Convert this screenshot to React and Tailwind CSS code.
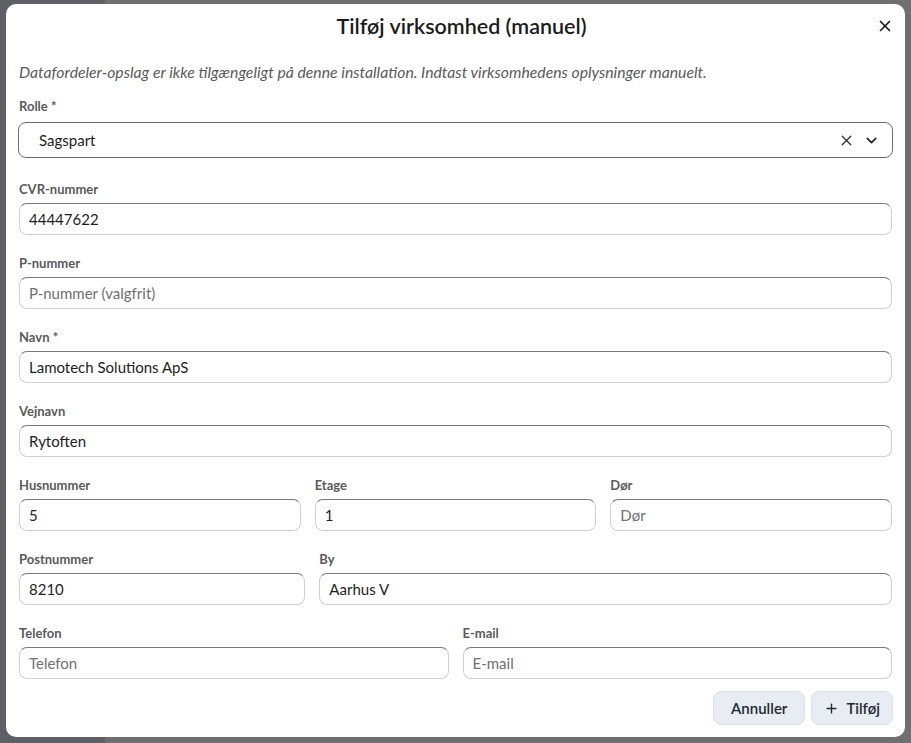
import React from 'react';
import { X, ChevronDown, Plus } from 'lucide-react';

const font = { fontFamily: '"Segoe UI", Lato, "Noto Sans", sans-serif' };

const Field = ({ label, value, placeholder }) => (
  <div className="flex flex-col min-w-0">
    <label className="text-[13px] leading-[18px] font-bold text-[#5a5a5a] mb-[5px]">{label}</label>
    <input
      className="h-8 w-full rounded-[8px] border border-[#d0d0d0] border-t-[#7a7a7a] bg-white px-[9px] text-[15px] text-[#1e1e1e] placeholder:text-[#6f6f6f] outline-none"
      defaultValue={value}
      placeholder={placeholder}
    />
  </div>
);

const App = () => {
  return (
    <div className="relative h-[743px] w-full overflow-hidden bg-[#6f6f6f]" style={font}>
      <div className="absolute left-0 top-0 h-full w-[105px] bg-[#5d6166]" />
      <div className="absolute left-[6px] top-[4px] flex h-[733px] w-[899px] flex-col rounded-[10px] bg-white px-[13px] pb-[12px]">
        <div className="relative flex h-[48px] items-center justify-center pb-[4px] pl-[12px]">
          <h2 className="text-[21.5px] font-semibold text-[#1b1b1b]">Tilføj virksomhed (manuel)</h2>
          <button className="absolute right-[-2px] top-[13px] text-[#1b1b1b]">
            <X size={18} strokeWidth={2.2} />
          </button>
        </div>
        <p className="mt-[10px] text-[15.75px] italic leading-[20px] text-[#5a5a5a]">
          Datafordeler-opslag er ikke tilgængeligt på denne installation. Indtast virksomhedens oplysninger manuelt.
        </p>

        <div className="mt-[15px] flex flex-col">
          <label className="text-[13px] leading-[18px] font-bold text-[#5a5a5a] mb-[7px]">Rolle *</label>
          <div className="-mx-[1px] flex h-9 items-center rounded-[8px] border border-[#6d6d6d] pl-[20px] pr-[12px]">
            <span className="flex-1 text-[15px] text-[#1e1e1e]">Sagspart</span>
            <X size={17} strokeWidth={1.8} className="text-[#2a2a2a] mr-[8px]" />
            <ChevronDown size={17} strokeWidth={2.6} className="text-[#2a2a2a]" />
          </div>
        </div>

        <div className="mt-[22px] flex flex-col gap-[19px]">
          <Field label="CVR-nummer" value="44447622" />
          <Field label="P-nummer" placeholder="P-nummer (valgfrit)" />
          <Field label="Navn *" value="Lamotech Solutions ApS" />
          <Field label="Vejnavn" value="Rytoften" />
          <div className="grid grid-cols-3 gap-x-[14px]">
            <Field label="Husnummer" value="5" />
            <Field label="Etage" value="1" />
            <Field label="Dør" placeholder="Dør" />
          </div>
          <div className="grid grid-cols-[1fr_2fr] gap-x-[14px]">
            <Field label="Postnummer" value="8210" />
            <Field label="By" value="Aarhus V" />
          </div>
          <div className="grid grid-cols-2 gap-x-[14px]">
            <Field label="Telefon" placeholder="Telefon" />
            <Field label="E-mail" placeholder="E-mail" />
          </div>
        </div>

        <div className="mt-auto flex justify-end gap-[6px] -mr-[1px]">
          <button className="h-[34px] rounded-[8px] border border-[#d9e0e7] bg-[#e7edf2] px-[17px] text-[15px] font-semibold text-[#1f2a36]">
            Annuller
          </button>
          <button className="flex h-[34px] items-center gap-[7px] rounded-[8px] border border-[#d9e0e7] bg-[#e7edf2] px-[12px] text-[15px] font-semibold text-[#1f2a36]">
            <Plus size={15} strokeWidth={2.2} />
            Tilføj
          </button>
        </div>
      </div>
    </div>
  );
};

export default App;
